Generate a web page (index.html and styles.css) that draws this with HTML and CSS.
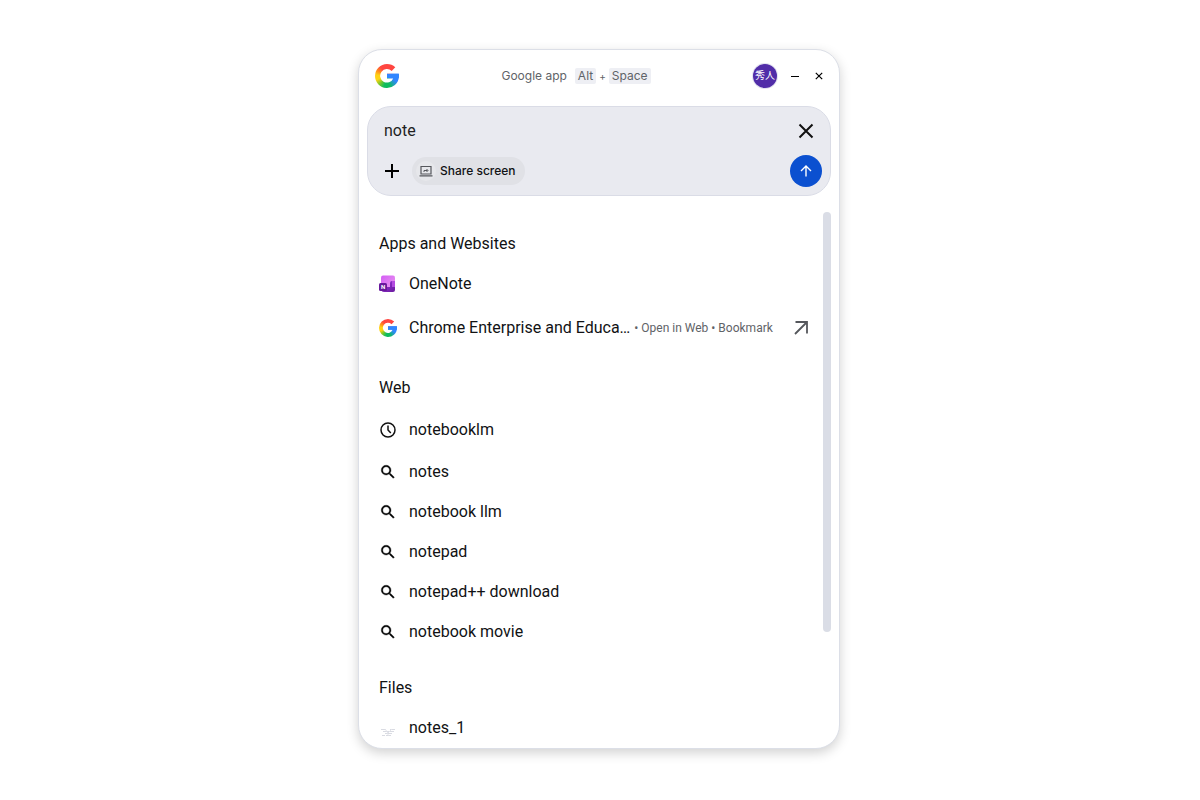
FILE: index.html
```html
<!DOCTYPE html>
<html lang="en">
<head>
    <meta charset="UTF-8">
    <meta name="viewport" content="width=device-width, initial-scale=1.0">
    <title>Google app</title>
    <link rel="stylesheet" href="styles.css">
</head>
<body>
    <!-- Shared shapes -->
    <svg class="defs" width="0" height="0" aria-hidden="true">
        <defs>
            <clipPath id="g-shape" clipPathUnits="objectBoundingBox">
                <path transform="scale(0.0416667)" d="M12 9.8H23.8C24.5 14.6 22.8 18.5 19.9 21A12 12 0 1 1 20.3 3.3L16.7 6.9A6.8 6.8 0 1 0 18.2 14.4H12Z"/>
            </clipPath>
            <symbol id="search" viewBox="0 0 24 24">
                <path d="M15.5 14h-.79l-.28-.27A6.471 6.471 0 0 0 16 9.5 6.5 6.5 0 1 0 9.5 16c1.61 0 3.09-.59 4.23-1.57l.27.28v.79l5 4.99L20.49 19l-4.99-5zm-6 0C7.01 14 5 11.99 5 9.5S7.01 5 9.5 5 14 7.01 14 9.5 11.99 14 9.5 14z" stroke="#111214" stroke-width="0.5"/>
            </symbol>
        </defs>
    </svg>

    <main class="window">
        <header class="titlebar">
            <span class="g-logo g-logo-large" role="img" aria-label="Google"></span>
            <div class="shortcut">
                <span class="app-name">Google app</span>
                <kbd>Alt</kbd><span class="plus">+</span><kbd>Space</kbd>
            </div>
            <div class="window-controls">
                <button class="avatar" type="button">秀人</button>
                <button class="control" type="button" aria-label="Minimize">
                    <svg width="10" height="10" viewBox="0 0 10 10"><path d="M1 5.5h8" stroke="#000"/></svg>
                </button>
                <button class="control" type="button" aria-label="Close">
                    <svg width="10" height="10" viewBox="0 0 10 10"><path d="M1.8 1.8l6.400 6.400M8.200 1.800l-6.400 6.400" stroke="#000" stroke-width="1.200"/></svg>
                </button>
            </div>
        </header>

        <form class="search-box" action="#">
            <div class="search-row">
                <input class="search-input" type="text" name="q" value="note" aria-label="Search" autocomplete="off">
                <button class="icon-button" type="reset" aria-label="Clear">
                    <svg width="16" height="16" viewBox="0 0 16 16"><path d="M1.500 1.500l13 13M14.500 1.500l-13 13" stroke="#111" stroke-width="2"/></svg>
                </button>
            </div>
            <div class="search-row">
                <div class="tools">
                    <button class="add-button" type="button" aria-label="Add">
                        <svg width="14" height="14" viewBox="0 0 14 14"><path d="M7 0v14M0 7h14" stroke="#000" stroke-width="2"/></svg>
                    </button>
                    <button class="share-button" type="button">
                        <span class="share-icon">
                            <svg width="14" height="14" viewBox="0 0 14 14" fill="none" stroke="#55575c">
                                <path d="M2 2.500h10v7.500H2z" stroke-width="1.200"/>
                                <path d="M0.500 11.800h13" stroke-width="1.200"/>
                                <path d="M5 8V6.500h3.500M7.500 5l1.500 1.500L7.500 8"/>
                            </svg>
                        </span>
                        <span class="share-label">Share screen</span>
                    </button>
                </div>
                <button class="submit-button" type="submit" aria-label="Search">
                    <svg width="12" height="12" viewBox="0 0 12 12" fill="none" stroke="#fff" stroke-width="1.400"><path d="M6 11.500V1.500M1 6l5-5 5 5"/></svg>
                </button>
            </div>
        </form>

        <div class="results">
            <div class="results-list">
                <section>
                    <h2>Apps and Websites</h2>
                    <a class="result" href="#">
                        <span class="result-icon">
                            <svg width="18" height="18" viewBox="0 0 18 18">
                                <defs>
                                    <linearGradient id="note-page" x1="0" y1="0" x2="1" y2="1">
                                        <stop offset="0" stop-color="#d35cf5"/>
                                        <stop offset="1" stop-color="#eb9bef"/>
                                    </linearGradient>
                                    <linearGradient id="note-base" x1="0" y1="0" x2="1" y2="1">
                                        <stop offset="0" stop-color="#9b35dc"/>
                                        <stop offset="1" stop-color="#6a1b9e"/>
                                    </linearGradient>
                                </defs>
                                <rect x="2" y="0.500" width="14" height="13" rx="2" fill="url(#note-page)"/>
                                <path d="M11 8a2 2 0 0 1 2-2h3v9a2 2 0 0 1-2 2H5a2.500 2.500 0 0 1-2.500-2.500V12H11z" fill="url(#note-base)"/>
                                <path d="M13 6h3v6h-3z" fill="#b44be0"/>
                                <rect x="0" y="8" width="8" height="8" rx="1.500" fill="#68189c"/>
                                <text class="note-letter" x="4" y="14" text-anchor="middle">N</text>
                            </svg>
                        </span>
                        <span class="result-title">OneNote</span>
                    </a>
                    <a class="result result-site" href="#">
                        <span class="result-icon"><span class="g-logo"></span></span>
                        <span class="result-title">Chrome Enterprise and Educa…</span>
                        <span class="result-meta">• Open in Web • Bookmark</span>
                        <svg class="open-icon" width="14" height="14" viewBox="0 0 14 14"><path d="M1 13L12.500 1.500M1.500 1H13v11.500" fill="none" stroke="#55575c" stroke-width="1.800"/></svg>
                    </a>
                </section>

                <section>
                    <h2>Web</h2>
                    <a class="result result-history" href="#">
                        <span class="result-icon">
                            <svg width="18" height="18" viewBox="0 0 18 18" fill="none" stroke="#111" stroke-width="1.500"><circle cx="9" cy="9" r="7"/><path d="M9 4.500V9l2.800 3"/></svg>
                        </span>
                        <span class="result-title">notebooklm</span>
                    </a>
                    <a class="result" href="#">
                        <span class="result-icon"><svg width="18" height="18"><use href="#search"/></svg></span>
                        <span class="result-title">notes</span>
                    </a>
                    <a class="result" href="#">
                        <span class="result-icon"><svg width="18" height="18"><use href="#search"/></svg></span>
                        <span class="result-title">notebook llm</span>
                    </a>
                    <a class="result" href="#">
                        <span class="result-icon"><svg width="18" height="18"><use href="#search"/></svg></span>
                        <span class="result-title">notepad</span>
                    </a>
                    <a class="result" href="#">
                        <span class="result-icon"><svg width="18" height="18"><use href="#search"/></svg></span>
                        <span class="result-title">notepad++ download</span>
                    </a>
                    <a class="result" href="#">
                        <span class="result-icon"><svg width="18" height="18"><use href="#search"/></svg></span>
                        <span class="result-title">notebook movie</span>
                    </a>
                </section>

                <section>
                    <h2>Files</h2>
                    <a class="result" href="#">
                        <span class="result-icon">
                            <svg width="18" height="18" viewBox="0 0 18 18" fill="none" stroke="#d9dbe2">
                                <path d="M2 10.500h5M11 10.500h5M4 12.500h11M6 14.500h7M3 16.500h3M7 16.500h5" stroke-width="1"/>
                                <path d="M6 10l3 4 4-4M8 14l2 3" stroke="#e2e3e9"/>
                            </svg>
                        </span>
                        <span class="result-title">notes_1</span>
                    </a>
                </section>
            </div>
            <div class="scroll-track"><div class="scroll-thumb"></div></div>
        </div>
    </main>
</body>
</html>
```

FILE: styles.css
```css
* {
    box-sizing: border-box;
}
body {
    display: flex;
    justify-content: center;
    height: 100vh;
    margin: 0;
    padding: 49px 2px 51px 0;
    background-color: #fff;
    color: #111214;
    font-family: Roboto, "Noto Sans CJK JP", sans-serif;
    font-size: 16px;
}
button {
    display: flex;
    align-items: center;
    justify-content: center;
    padding: 0;
    border: none;
    background: transparent;
    color: inherit;
    font-family: inherit;
    cursor: pointer;
}
svg {
    display: block;
}
.defs {
    position: absolute;
}
.window {
    display: flex;
    flex-direction: column;
    width: 100%;
    max-width: 482px;
    padding: 0 8px;
    border: 1px solid #dcdfe7;
    border-radius: 24px;
    background-color: #fff;
    box-shadow: 0 4px 12px rgba(0, 0, 0, 0.18);
    overflow: hidden;
}

/* Title bar */
.titlebar {
    display: flex;
    align-items: center;
    justify-content: space-between;
    height: 52px;
    margin-bottom: 4px;
    padding-left: 8px;
}
.g-logo {
    width: 18px;
    height: 18px;
    background:
        linear-gradient(#3186ff, #3186ff) 100% 48% / 51% 22% no-repeat,
        conic-gradient(#ff4641 0deg 45deg, #3186ff 75deg 120deg, #0ebc5f 165deg 195deg, #6cc72e 220deg, #ffd314 250deg 275deg, #ff8a1c 300deg, #ff4641 325deg);
    clip-path: url(#g-shape);
}
.g-logo-large {
    width: 24px;
    height: 24px;
}
.shortcut {
    display: flex;
    align-items: center;
    color: #5f6368;
    font-family: Inter, sans-serif;
    font-size: 12px;
    line-height: 16px;
}
.app-name {
    margin-right: 8px;
}
.plus {
    margin: 0 3px;
    font-size: 10px;
}
kbd {
    padding: 0 3px;
    border-radius: 2px;
    background-color: #eeeff4;
    font-family: inherit;
    font-size: 12px;
}
.window-controls {
    display: flex;
    align-items: center;
    justify-content: flex-end;
}
.avatar {
    width: 24px;
    height: 24px;
    margin-right: 6px;
    border-radius: 50%;
    background-color: #512da8;
    box-shadow: 0 0 0 1px #e3e3f0;
    color: #fff;
    font-size: 10px;
    line-height: 12px;
}
.control {
    width: 24px;
    height: 24px;
}

/* Search box */
.search-box {
    display: flex;
    flex-direction: column;
    padding: 8px;
    border: 1px solid #dadce6;
    border-radius: 24px;
    background-color: #e9eaf0;
}
.search-row {
    display: flex;
    align-items: center;
    justify-content: space-between;
}
.search-input {
    flex: 1;
    min-width: 0;
    height: 32px;
    padding: 0 8px 2px;
    border: none;
    outline: none;
    background: transparent;
    color: #1f1f1f;
    font-family: inherit;
    font-size: 16px;
}
.icon-button,
.add-button,
.submit-button {
    width: 32px;
    height: 32px;
}
.search-row + .search-row {
    margin-top: 8px;
}
.tools {
    display: flex;
    align-items: center;
    gap: 4px;
}
.share-button {
    gap: 4px;
    height: 28px;
    padding: 0 9px 0 4px;
    border-radius: 14px;
    background-color: #e0e1e6;
    font-family: Inter, sans-serif;
    font-size: 12px;
    font-weight: 500;
}
.share-label {
    padding-bottom: 1px;
}
.share-icon {
    display: flex;
    align-items: center;
    justify-content: center;
    width: 20px;
    height: 20px;
    border-radius: 50%;
    background-color: #e6e7eb;
}
.submit-button {
    border-radius: 50%;
    background-color: #0b50d0;
}

/* Results */
.results {
    display: flex;
    flex: 1;
    min-height: 0;
    margin-top: 16px;
}
.results-list {
    flex: 1;
    min-width: 0;
    padding: 12px 12px 0;
    overflow: hidden;
}
section {
    margin-bottom: 16px;
}
h2 {
    margin: 0;
    font-size: 16px;
    font-weight: 400;
    line-height: 40px;
}
.result {
    display: flex;
    align-items: center;
    height: 40px;
    color: inherit;
    text-decoration: none;
}
.result-site {
    height: 48px;
}
.result-history {
    height: 44px;
}
.result-icon {
    flex: none;
    width: 18px;
    margin-right: 12px;
}
.result-icon .g-logo {
    display: block;
}
.result-title {
    padding-bottom: 2px;
    white-space: nowrap;
}
.result-meta {
    flex: none;
    margin-left: 4px;
    color: #5f6368;
    font-size: 12px;
}
.open-icon {
    flex: none;
    margin: 0 3px 0 auto;
}
.note-letter {
    fill: #fff;
    font-size: 6px;
    font-weight: 700;
}
.scroll-track {
    flex: none;
    width: 8px;
}
.scroll-thumb {
    height: 78.4%;
    border-radius: 4px;
    background-color: #dadde6;
}
```
